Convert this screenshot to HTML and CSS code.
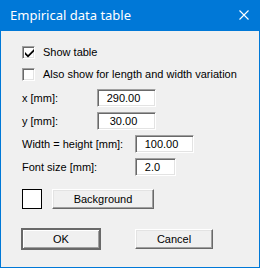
FILE: index.html
```html
<!DOCTYPE html>
<html lang="en">
<head>
    <meta charset="UTF-8">
    <title>Empirical data table</title>
    <link rel="stylesheet" href="styles.css">
</head>
<body>
    <div class="dialog">
        <div class="title-bar">
            <span class="title">Empirical data table</span>
            <svg class="close" width="10" height="10" viewBox="0 0 10 10">
                <path d="M0.5 0.5 L9.5 9.5 M9.5 0.5 L0.5 9.5" stroke="#fff" stroke-width="1.1" fill="none"/>
            </svg>
        </div>
        <div class="content">
            <label class="check-row">
                <span class="check-box">
                    <svg width="9" height="9" viewBox="0 0 9 9">
                        <path d="M0 3 L0 5.5 L3 8.5 L9 2.5 L9 0 L3 6 Z" fill="#000"/>
                    </svg>
                </span>
                <span>Show table</span>
            </label>
            <label class="check-row">
                <span class="check-box"></span>
                <span>Also show for length and width variation</span>
            </label>

            <div class="fields">
                <div class="field">
                    <span class="field-label short">x [mm]:</span>
                    <span class="input">290.00</span>
                </div>
                <div class="field">
                    <span class="field-label short">y [mm]:</span>
                    <span class="input">30.00</span>
                </div>
                <div class="field">
                    <span class="field-label long">Width = height [mm]:</span>
                    <span class="input">100.00</span>
                </div>
                <div class="field">
                    <span class="field-label long">Font size [mm]:</span>
                    <span class="input narrow">2.0</span>
                </div>
            </div>

            <div class="color-row">
                <span class="swatch"></span>
                <button class="button wide">Background</button>
            </div>

            <div class="actions">
                <button class="button default">OK</button>
                <button class="button">Cancel</button>
            </div>
        </div>
    </div>
</body>
</html>
```

FILE: styles.css
```css
:root {
    --title-blue: #0078d7;
    --face: #f0f0f0;
    --shadow: #a0a0a0;
    --dark-shadow: #696969;
    --light: #e3e3e3;
}

* {
    margin: 0;
    padding: 0;
    box-sizing: border-box;
}

body {
    margin: 0;
    background: var(--face);
    font-family: 'Liberation Sans', Arial, sans-serif;
    font-size: 11px;
    color: #000;
}

.dialog {
    width: 260px;
    height: 268px;
    border: 1px solid var(--title-blue);
    border-top: none;
    background: var(--face);
    display: flex;
    flex-direction: column;
}

.title-bar {
    height: 31px;
    margin: 0 -1px;
    background: var(--title-blue);
    display: flex;
    align-items: center;
    justify-content: space-between;
    padding: 0 11px 1px 10px;
}

.title {
    font-family: 'Noto Sans', sans-serif;
    font-size: 13px;
    color: #fff;
}

.close {
    display: block;
}

.content {
    padding: 15px 0 0 21px;
    display: flex;
    flex-direction: column;
}

.check-row {
    display: flex;
    align-items: center;
    gap: 8px;
    height: 13px;
    line-height: 13px;
    margin-bottom: 9px;
}

.check-box {
    width: 13px;
    height: 13px;
    background: #fff;
    border: 1px solid;
    border-color: var(--shadow) #fff #fff var(--shadow);
    box-shadow: inset 1px 1px 0 var(--dark-shadow), inset -1px -1px 0 var(--light);
    display: flex;
    align-items: center;
    justify-content: center;
}

.check-box svg {
    display: block;
    margin: 1px 0 0 1px;
}

.fields {
    display: flex;
    flex-direction: column;
    gap: 5px;
    margin-top: -1px;
}

.field {
    display: flex;
    align-items: center;
    height: 18px;
}

.field-label.short {
    width: 75px;
}

.field-label.long {
    width: 113px;
}

.input {
    width: 59px;
    height: 18px;
    line-height: 16px;
    background: #fff;
    border: 1px solid;
    border-color: var(--shadow) #fff #fff var(--shadow);
    box-shadow: inset 1px 1px 0 var(--dark-shadow), inset -1px -1px 0 var(--light);
    text-align: center;
    padding-right: 6px;
}

.input.narrow {
    width: 41px;
}

.color-row {
    display: flex;
    align-items: center;
    gap: 10px;
    margin-top: 13px;
}

.swatch {
    width: 20px;
    height: 20px;
    background: #fff;
    border: 1px solid #000;
}

.button {
    height: 20px;
    width: 78px;
    font-family: 'Liberation Sans', Arial, sans-serif;
    font-size: 11px;
    background: var(--face);
    border: 1px solid;
    border-color: #fff var(--dark-shadow) var(--dark-shadow) #fff;
    box-shadow: inset -1px -1px 0 var(--shadow), inset 1px 1px 0 var(--light);
    color: #000;
}

.button.wide {
    width: 102px;
}

.button.default {
    outline: 1px solid var(--dark-shadow);
    border-color: var(--dark-shadow);
    box-shadow: inset 1px 1px 0 #fff, inset -1px -1px 0 var(--shadow);
}

.actions {
    display: flex;
    gap: 35px;
    margin-top: 20px;
}
```
